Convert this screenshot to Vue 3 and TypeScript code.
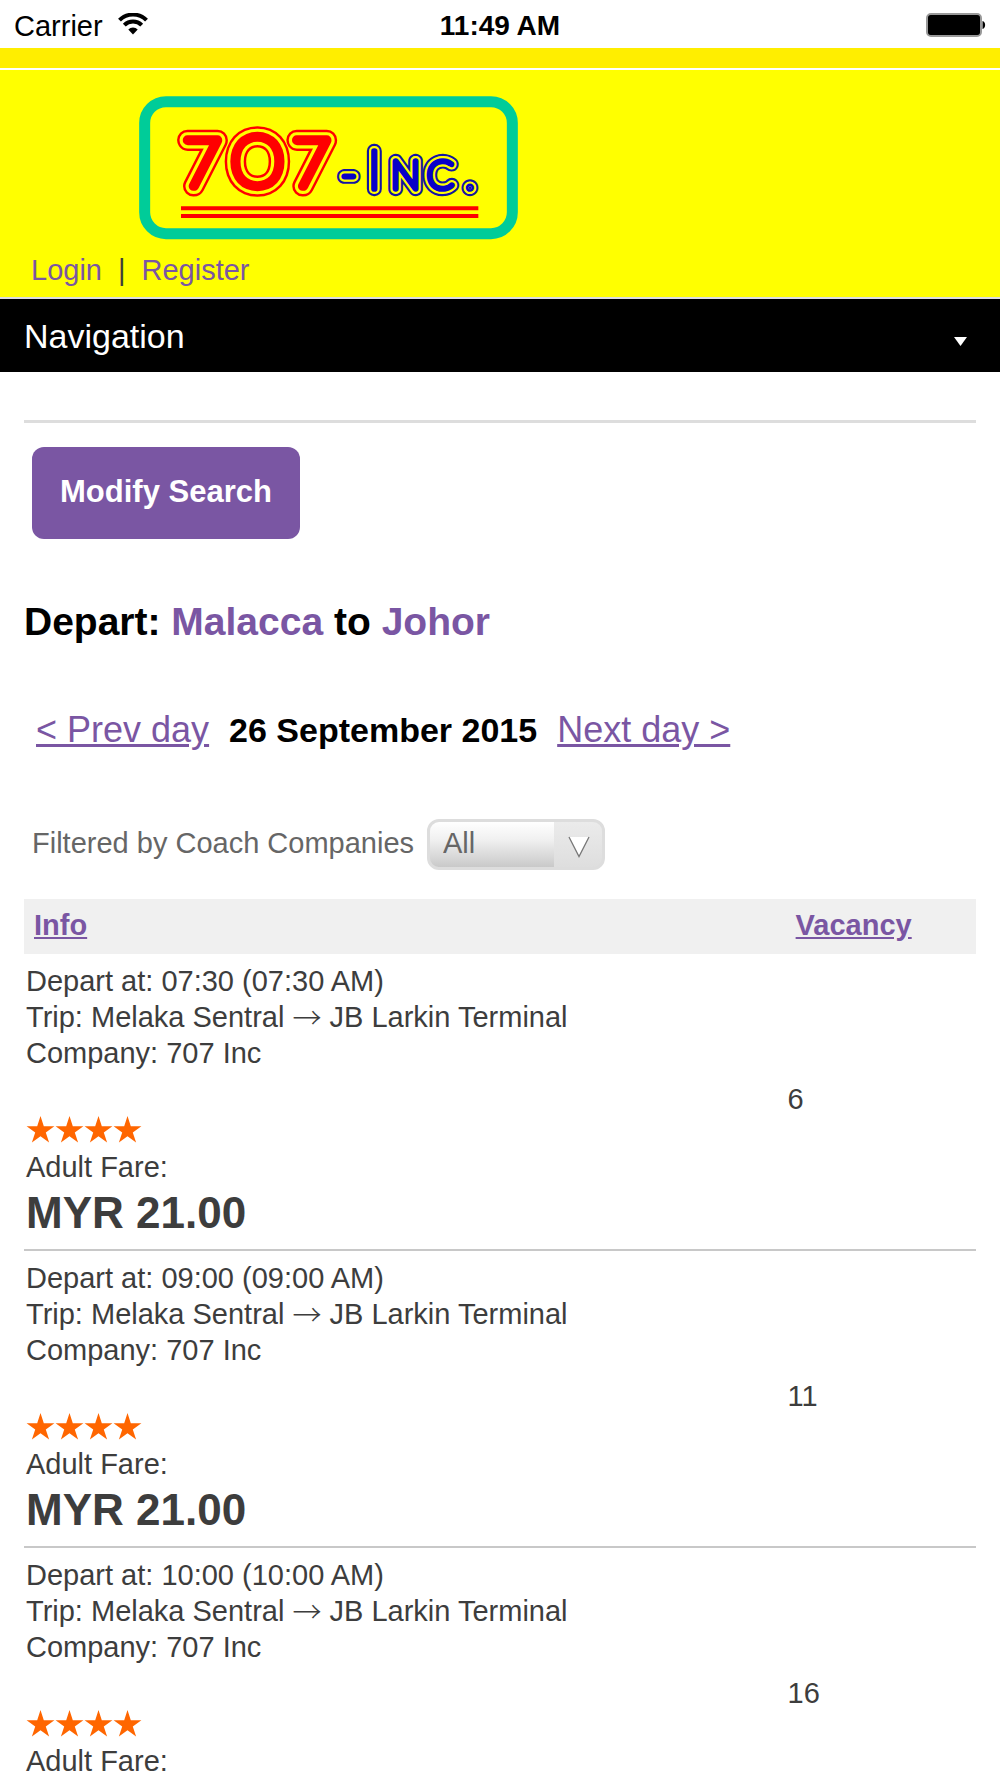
<script setup lang="ts">
import { ref } from 'vue'

interface Trip {
  time: string
  time12: string
  from: string
  to: string
  company: string
  stars: number
  fare: string
  vacancy: number
}

const company = ref('All')

const trips: Trip[] = [
  { time: '07:30', time12: '07:30 AM', from: 'Melaka Sentral', to: 'JB Larkin Terminal', company: '707 Inc', stars: 4, fare: 'MYR 21.00', vacancy: 6 },
  { time: '09:00', time12: '09:00 AM', from: 'Melaka Sentral', to: 'JB Larkin Terminal', company: '707 Inc', stars: 4, fare: 'MYR 21.00', vacancy: 11 },
  { time: '10:00', time12: '10:00 AM', from: 'Melaka Sentral', to: 'JB Larkin Terminal', company: '707 Inc', stars: 4, fare: 'MYR 21.00', vacancy: 16 },
]
</script>

<template>
  <div class="screen">
    <div class="status">
      <div class="carrier">
        <span>Carrier</span>
        <svg class="wifi" viewBox="0 0 30 22" aria-hidden="true">
          <path d="M1.5 7.2A19 19 0 0 1 28.5 7.2" fill="none" stroke="#000" stroke-width="4" />
          <path d="M6.3 12.2A12.3 12.3 0 0 1 23.7 12.2" fill="none" stroke="#000" stroke-width="4" />
          <path d="M10.3 16.4A6.6 6.6 0 0 1 19.7 16.4L15 21.6Z" />
        </svg>
      </div>
      <div class="clock">11:49 AM</div>
      <div class="power">
        <svg class="battery" viewBox="0 0 60 24" aria-hidden="true">
          <rect x="1" y="1" width="54" height="22" rx="4" fill="#000" stroke="#999" stroke-width="2" />
          <rect x="2.5" y="2.5" width="51" height="19" rx="2" fill="#000" />
          <path d="M56.5 8C60 8.5 60 15.5 56.5 16Z" />
        </svg>
      </div>
    </div>
    <div class="stripe"></div>

    <header class="brand">
      <svg class="logo" viewBox="0 0 1200 495" role="img" aria-label="707-Inc.">
        <defs>
          <g id="logo-red" stroke-linejoin="round" stroke-linecap="round">
            <text x="158 301 486" y="304"><tspan font-size="198">7</tspan><tspan font-size="208">O</tspan><tspan font-size="198">7</tspan></text>
          </g>
          <g id="logo-blue" stroke-linejoin="round" stroke-linecap="round">
            <text y="313"><tspan x="633" font-size="125">-</tspan><tspan x="713" font-size="162">I</tspan><tspan x="782 890 1006" font-size="118">NC.</tspan></text>
          </g>
        </defs>
        <rect x="44" y="50" width="1103" height="396" rx="64" fill="none" stroke="#00cc99" stroke-width="33" />
        <g font-family="Lato, sans-serif" font-weight="100">
          <use href="#logo-red" stroke="#ff0000" fill="#ff0000" stroke-width="62" />
          <use href="#logo-red" stroke="#ffff00" fill="#ffff00" stroke-width="47" />
          <use href="#logo-red" stroke="#ff0000" fill="#ff0000" stroke-width="28" />
          <use href="#logo-blue" stroke="#1414a0" fill="#1414a0" stroke-width="43" />
          <use href="#logo-blue" stroke="#ffff00" fill="#ffff00" stroke-width="30" />
          <use href="#logo-blue" stroke="#0800c8" fill="#0800c8" stroke-width="17" />
        </g>
        <path d="M153 370H1045M153 393H1045" stroke="#ff0000" stroke-width="12" />
      </svg>
      <div class="account">
        <a href="#login">Login</a>
        <span>|</span>
        <a href="#register">Register</a>
      </div>
    </header>

    <button class="nav" type="button">
      <span>Navigation</span>
      <svg class="nav-arrow" viewBox="0 0 13 10" aria-hidden="true"><path d="M0 0H13L6.5 9Z" fill="#fff" /></svg>
    </button>

    <main>
      <hr />
      <button class="modify" type="button">Modify Search</button>
      <h1>Depart: <em>Malacca</em> to <em>Johor</em></h1>
      <div class="days">
        <a href="#prev">&lt; Prev day</a>
        <strong>26 September 2015</strong>
        <a href="#next">Next day &gt;</a>
      </div>
      <div class="filter">
        <label for="company">Filtered by Coach Companies</label>
        <div class="picker">
          <select id="company" v-model="company">
            <option>All</option>
            <option>707 Inc</option>
          </select>
          <svg class="picker-arrow" viewBox="0 0 22 22" aria-hidden="true">
            <path d="M1 1H21L11 21Z" fill="#fff" />
            <path d="M1 1L11 20.5L21 1" fill="none" stroke="#777" stroke-width="1.3" />
          </svg>
        </div>
      </div>

      <table>
        <thead>
          <tr>
            <th><a href="#info">Info</a></th>
            <th class="seats"><a href="#vacancy">Vacancy</a></th>
          </tr>
        </thead>
        <tbody>
          <tr v-for="trip in trips" :key="trip.time">
            <td class="info">
              <div>Depart at: {{ trip.time }} ({{ trip.time12 }})</div>
              <div>Trip: {{ trip.from }} <span class="arrow">→</span> {{ trip.to }}</div>
              <div>Company: {{ trip.company }}</div>
              <div class="stars" role="img" :aria-label="`${trip.stars} stars`">
                <svg v-for="n in trip.stars" :key="n" viewBox="0 0 29 27" aria-hidden="true">
                  <path d="M14.5 0L17.8 10.2H28.4L19.8 16.4L23.1 26.5L14.5 20.3L5.9 26.5L9.2 16.4L0.6 10.2H11.2Z" fill="#ff6600" />
                </svg>
              </div>
              <div>Adult Fare:</div>
              <div class="fare">{{ trip.fare }}</div>
            </td>
            <td class="seats">{{ trip.vacancy }}</td>
          </tr>
        </tbody>
      </table>
    </main>
  </div>
</template>

<style>
body {
  margin: 0;
  background: #fff;
}
</style>

<style scoped>
.screen {
  height: 100vh;
  overflow: hidden;
  font-family: "Liberation Sans", Arial, sans-serif;
  font-size: 29px;
  line-height: 36px;
  color: #3d3d3d;
}
button,
select {
  font-family: inherit;
  border: 0;
  margin: 0;
}
a,
em {
  color: #7a56a3;
  font-style: normal;
}

.status {
  display: grid;
  grid-template-columns: 1fr auto 1fr;
  align-items: center;
  box-sizing: border-box;
  height: 48px;
  padding: 3px 14px 0;
  color: #000;
  font-size: 29px;
}
.carrier {
  display: flex;
  align-items: center;
  gap: 15px;
}
.wifi {
  width: 30px;
  height: 22px;
  margin-bottom: 4px;
}
.clock {
  font-size: 28px;
  font-weight: 700;
}
.power {
  display: flex;
  justify-content: flex-end;
}
.battery {
  width: 60px;
  height: 24px;
  margin-bottom: 2px;
}
.stripe {
  height: 20px;
  background: #ffee00;
  border-bottom: 2px solid #fff;
}

.brand {
  padding: 15px 31px 9px;
  background: #ffff00;
}
.logo {
  display: block;
  width: 400px;
  height: 165px;
  margin: 0 0 2px 99px;
}
.account {
  display: flex;
  gap: 16px;
}
.account a {
  text-decoration: none;
}

.nav {
  display: flex;
  align-items: center;
  justify-content: space-between;
  width: 100%;
  height: 75px;
  padding: 2px 33px 0 24px;
  border-top: 2px solid #ddd;
  background: #000;
  color: #fff;
  font-size: 34px;
}
.nav-arrow {
  width: 13px;
  height: 10px;
  margin-top: 10px;
}

main {
  padding: 48px 24px 0;
}
hr {
  height: 3px;
  margin: 0 0 24px;
  border: 0;
  background: #ddd;
}
.modify {
  display: block;
  height: 92px;
  margin-left: 8px;
  padding: 0 28px 2px;
  border-radius: 12px;
  background: #7a56a3;
  color: #fff;
  font-size: 31px;
  font-weight: 700;
}
h1 {
  margin: 61px 0 64px;
  color: #000;
  font-size: 39px;
  line-height: 44px;
}
.days {
  display: flex;
  align-items: baseline;
  gap: 20px;
  padding-left: 12px;
  font-size: 36px;
  line-height: 44px;
}
.days strong {
  color: #000;
  font-size: 34px;
}
.filter {
  display: flex;
  align-items: center;
  gap: 13px;
  margin: 67px 0 29px;
  padding-left: 8px;
  color: #666;
}
.filter label {
  margin-bottom: 3px;
}
.picker {
  position: relative;
}
.picker select {
  appearance: none;
  display: block;
  width: 178px;
  height: 51px;
  padding: 0 60px 3px 13px;
  border: 3px solid #ddd;
  border-radius: 12px;
  background:
    linear-gradient(#ebebeb, #dedede) right / 48px 100% no-repeat,
    linear-gradient(#fff, #f0f0f0 40%, #c9c9c9);
  color: #666;
  font-size: 29px;
}
.picker-arrow {
  position: absolute;
  top: 17px;
  right: 15px;
  width: 22px;
  height: 22px;
  pointer-events: none;
}

table {
  width: 100%;
  border-collapse: collapse;
  table-layout: fixed;
}
th {
  padding: 8px 10px 11px;
  background: #f0f0f0;
  text-align: left;
}
td {
  padding: 9px 2px;
  border-bottom: 2px solid #c8c8c8;
}
.seats {
  width: 20%;
  box-sizing: border-box;
}
td.seats {
  padding: 4px 2px 9px;
}
.arrow {
  font-family: "Noto Sans CJK JP", sans-serif;
  font-weight: 300;
  line-height: 1px;
  vertical-align: -2px;
}
.stars {
  display: flex;
  padding: 45px 0 6px;
}
.stars svg {
  width: 29px;
  height: 27px;
}
.fare {
  font-size: 44px;
  font-weight: 700;
  line-height: 55px;
}
</style>
